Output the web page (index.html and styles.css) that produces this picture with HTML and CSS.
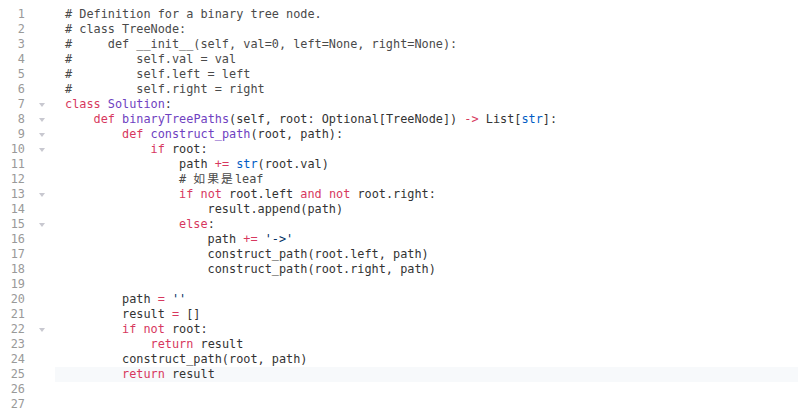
FILE: index.html
```html
<!DOCTYPE html>
<html>
<head>
<meta charset="utf-8">
<link rel="stylesheet" href="styles.css">
</head>
<body>
<div class="editor">
  <div class="line"><span class="ln">1</span><span class="fold"></span><span class="code"><span class="cm"># Definition for a binary tree node.</span></span></div>
  <div class="line"><span class="ln">2</span><span class="fold"></span><span class="code"><span class="cm"># class TreeNode:</span></span></div>
  <div class="line"><span class="ln">3</span><span class="fold"></span><span class="code"><span class="cm">#     def __init__(self, val=0, left=None, right=None):</span></span></div>
  <div class="line"><span class="ln">4</span><span class="fold"></span><span class="code"><span class="cm">#         self.val = val</span></span></div>
  <div class="line"><span class="ln">5</span><span class="fold"></span><span class="code"><span class="cm">#         self.left = left</span></span></div>
  <div class="line"><span class="ln">6</span><span class="fold"></span><span class="code"><span class="cm">#         self.right = right</span></span></div>
  <div class="line"><span class="ln">7</span><span class="fold open"></span><span class="code"><span class="kw">class</span> <span class="fn">Solution</span>:</span></div>
  <div class="line"><span class="ln">8</span><span class="fold open"></span><span class="code">    <span class="kw">def</span> <span class="fn">binaryTreePaths</span>(self, root: Optional[TreeNode]) <span class="kw">-&gt;</span> List[<span class="bi">str</span>]:</span></div>
  <div class="line"><span class="ln">9</span><span class="fold open"></span><span class="code">        <span class="kw">def</span> <span class="fn">construct_path</span>(root, path):</span></div>
  <div class="line"><span class="ln">10</span><span class="fold open"></span><span class="code">            <span class="kw">if</span> root:</span></div>
  <div class="line"><span class="ln">11</span><span class="fold"></span><span class="code">                path <span class="kw">+=</span> <span class="bi">str</span>(root.val)</span></div>
  <div class="line"><span class="ln">12</span><span class="fold"></span><span class="code">                <span class="cm"># <span class="cjk">如果是</span>leaf</span></span></div>
  <div class="line"><span class="ln">13</span><span class="fold open"></span><span class="code">                <span class="kw">if</span> <span class="kw">not</span> root.left <span class="kw">and</span> <span class="kw">not</span> root.right:</span></div>
  <div class="line"><span class="ln">14</span><span class="fold"></span><span class="code">                    result.append(path)</span></div>
  <div class="line"><span class="ln">15</span><span class="fold open"></span><span class="code">                <span class="kw">else</span>:</span></div>
  <div class="line"><span class="ln">16</span><span class="fold"></span><span class="code">                    path <span class="kw">+=</span> <span class="st">'-&gt;'</span></span></div>
  <div class="line"><span class="ln">17</span><span class="fold"></span><span class="code">                    construct_path(root.left, path)</span></div>
  <div class="line"><span class="ln">18</span><span class="fold"></span><span class="code">                    construct_path(root.right, path)</span></div>
  <div class="line"><span class="ln">19</span><span class="fold"></span><span class="code"> </span></div>
  <div class="line"><span class="ln">20</span><span class="fold"></span><span class="code">        path <span class="kw">=</span> <span class="st">''</span></span></div>
  <div class="line"><span class="ln">21</span><span class="fold"></span><span class="code">        result <span class="kw">=</span> []</span></div>
  <div class="line"><span class="ln">22</span><span class="fold open"></span><span class="code">        <span class="kw">if</span> <span class="kw">not</span> root:</span></div>
  <div class="line"><span class="ln">23</span><span class="fold"></span><span class="code">            <span class="kw">return</span> result</span></div>
  <div class="line"><span class="ln">24</span><span class="fold"></span><span class="code">        construct_path(root, path)</span></div>
  <div class="line active"><span class="ln">25</span><span class="fold"></span><span class="code">        <span class="kw">return</span> result</span></div>
  <div class="line"><span class="ln">26</span><span class="fold"></span><span class="code"> </span></div>
  <div class="line"><span class="ln">27</span><span class="fold"></span><span class="code"> </span></div>
</div>
</body>
</html>
```
FILE: styles.css
```css
html, body {
  margin: 0;
  padding: 0;
  background: #ffffff;
}

.editor {
  padding-top: 7px;
  font-family: "DejaVu Sans Mono", "Liberation Mono", "Noto Sans CJK SC", monospace;
  font-size: 11.85px;
  color: #333333;
}

.line {
  display: flex;
  height: 15px;
  line-height: 15px;
}

.ln {
  width: 25px;
  text-align: right;
  color: #999999;
  flex: none;
}

.fold {
  width: 30px;
  flex: none;
  display: flex;
  align-items: center;
  justify-content: center;
  padding-left: 3px;
  box-sizing: border-box;
}

.fold.open::before {
  content: "";
  width: 0;
  height: 0;
  border-left: 3px solid transparent;
  border-right: 3px solid transparent;
  border-top: 4px solid #c8c8d0;
}

.code {
  flex: 1;
  padding-left: 10px;
  white-space: pre;
}

.active .code {
  background: #f7f9fb;
}

.cm { color: #4a4a4a; }
.kw { color: #d7385e; }
.fn { color: #6f42c1; }
.bi { color: #005cc5; }
.st { color: #032f62; }

.cjk {
  font-family: "Noto Sans CJK SC", sans-serif;
  font-size: 11.85px;
  line-height: 1;
  letter-spacing: 2px;
}
```
